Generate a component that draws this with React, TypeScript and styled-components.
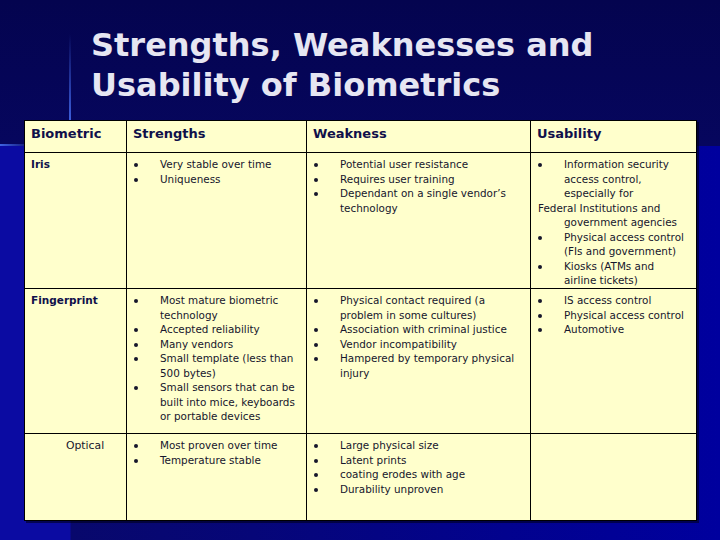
import styled, {createGlobalStyle} from 'styled-components';

type Entry = { lines: string[]; outdent?: number[] };

type Row = {
    label: string;
    plain?: boolean;
    height: number;
    cells: Entry[][];
};

const rows: Row[] = [
    {
        label: 'Iris',
        height: 135,
        cells: [
            [{lines: ['Very stable over time']}, {lines: ['Uniqueness']}],
            [
                {lines: ['Potential user resistance']},
                {lines: ['Requires user training']},
                {lines: ['Dependant on a single vendor\u2019s', 'technology']},
            ],
            [
                {
                    lines: ['Information security', 'access control,', 'especially for', 'Federal Institutions and', 'government agencies'],
                    outdent: [3],
                },
                {lines: ['Physical access control', '(FIs and government)']},
                {lines: ['Kiosks (ATMs and', 'airline tickets)']},
            ],
        ],
    },
    {
        label: 'Fingerprint',
        height: 144,
        cells: [
            [
                {lines: ['Most mature biometric', 'technology']},
                {lines: ['Accepted reliability']},
                {lines: ['Many vendors']},
                {lines: ['Small template (less than', '500 bytes)']},
                {lines: ['Small sensors that can be', 'built into mice, keyboards', 'or portable devices']},
            ],
            [
                {lines: ['Physical contact required (a', 'problem in some cultures)']},
                {lines: ['Association with criminal justice']},
                {lines: ['Vendor incompatibility']},
                {lines: ['Hampered by temporary physical', 'injury']},
            ],
            [
                {lines: ['IS access control']},
                {lines: ['Physical access control']},
                {lines: ['Automotive']},
            ],
        ],
    },
    {
        label: 'Optical',
        plain: true,
        height: 86,
        cells: [
            [{lines: ['Most proven over time']}, {lines: ['Temperature stable']}],
            [
                {lines: ['Large physical size']},
                {lines: ['Latent prints']},
                {lines: ['coating erodes with age']},
                {lines: ['Durability unproven']},
            ],
            [],
        ],
    },
];

const headers = ['Biometric', 'Strengths', 'Weakness', 'Usability'];

const App = () => {
    return (
        <>
            <GlobalStyle/>
            <Slide>
                <Title>
                    Strengths, Weaknesses and
                    <br/>
                    Usability of Biometrics
                </Title>

                <Table $rows={rows.map((r) => r.height)}>
                    {headers.map((h) => (
                        <HeadCell key={h}>{h}</HeadCell>
                    ))}

                    {rows.map((row) => (
                        <RowGroup key={row.label}>
                            <LabelCell $plain={row.plain}>{row.label}</LabelCell>
                            {row.cells.map((items, i) => (
                                <Cell key={i}>
                                    {items.map((item, j) => (
                                        <Item key={j}>
                                            <Bullet/>
                                            <ItemText>
                                                {item.lines.map((line, k) => (
                                                    <Line key={k} $outdent={item.outdent?.includes(k)}>
                                                        {line}
                                                    </Line>
                                                ))}
                                            </ItemText>
                                        </Item>
                                    ))}
                                </Cell>
                            ))}
                        </RowGroup>
                    ))}
                </Table>
            </Slide>
        </>
    );
};

export default App;

// 스타일링
const GlobalStyle = createGlobalStyle`
    body {
        margin: 0;
        background: #05055c;
    }
`;

const Slide = styled.div`
    width: 720px;
    height: 540px;
    box-sizing: border-box;
    padding: 25px 0 0 24px;
    overflow: hidden;
    font-family: "DejaVu Sans", Verdana, sans-serif;
    background:
        linear-gradient(to bottom, rgba(60, 100, 230, 0), rgba(70, 110, 240, 0.85)) 69px 34px / 2px 86px no-repeat,
        linear-gradient(to right, rgba(70, 110, 240, 0.9), rgba(70, 110, 240, 0)) 0 144px / 34px 2px no-repeat,
        linear-gradient(to right, #0b0ba2 0, #0b0ba2 70px, #08086c 71px, #060678 35%, #02028e 70%, #00009e 100%) 0 146px / 100% 394px no-repeat,
        linear-gradient(to bottom, #04044f 0, #06065e 100%) 0 0 / 100% 146px no-repeat;
`;

const Title = styled.h1`
    margin: 0 0 15px 67px;
    font-size: 32px;
    line-height: 40px;
    font-weight: 700;
    color: #e6e6f2;
`;

const Table = styled.div<{ $rows: number[] }>`
    display: grid;
    width: fit-content;
    grid-template-columns: 101px 179px 223px 165px;
    grid-template-rows: 31px ${(p) => p.$rows.map((h) => `${h}px`).join(' ')};
    gap: 1px;
    border: 1px solid #000;
    background: #000;
    box-shadow: 2px 2px 0 rgba(0, 0, 20, 0.55);
`;

const RowGroup = styled.div`
    display: contents;
`;

const HeadCell = styled.div`
    background: #ffffcc;
    padding: 5px 6px 0;
    font-size: 13px;
    line-height: 16px;
    font-weight: 700;
    color: #10104a;
`;

const Cell = styled.div`
    background: #ffffcc;
    padding: 4px 0 0 7px;
    font-size: 10.4px;
    line-height: 14.5px;
    color: #16162c;
`;

const LabelCell = styled.div<{ $plain?: boolean }>`
    background: #ffffcc;
    padding: ${(p) => (p.$plain ? '5px 0 0 41px' : '4px 0 0 6px')};
    font-size: ${(p) => (p.$plain ? '10.8px' : '10.5px')};
    line-height: 14.5px;
    font-weight: ${(p) => (p.$plain ? 400 : 700)};
    color: ${(p) => (p.$plain ? '#16162c' : '#10104a')};
`;

const Item = styled.div`
    display: flex;
    align-items: flex-start;
`;

const Bullet = styled.span`
    flex: none;
    width: 4px;
    height: 4px;
    margin: 6px 22px 0 0;
    border-radius: 50%;
    background: #16162c;
`;

const ItemText = styled.div`
    display: flex;
    flex-direction: column;
`;

const Line = styled.span<{ $outdent?: boolean }>`
    white-space: nowrap;
    margin-left: ${(p) => (p.$outdent ? '-26px' : '0')};
`;
